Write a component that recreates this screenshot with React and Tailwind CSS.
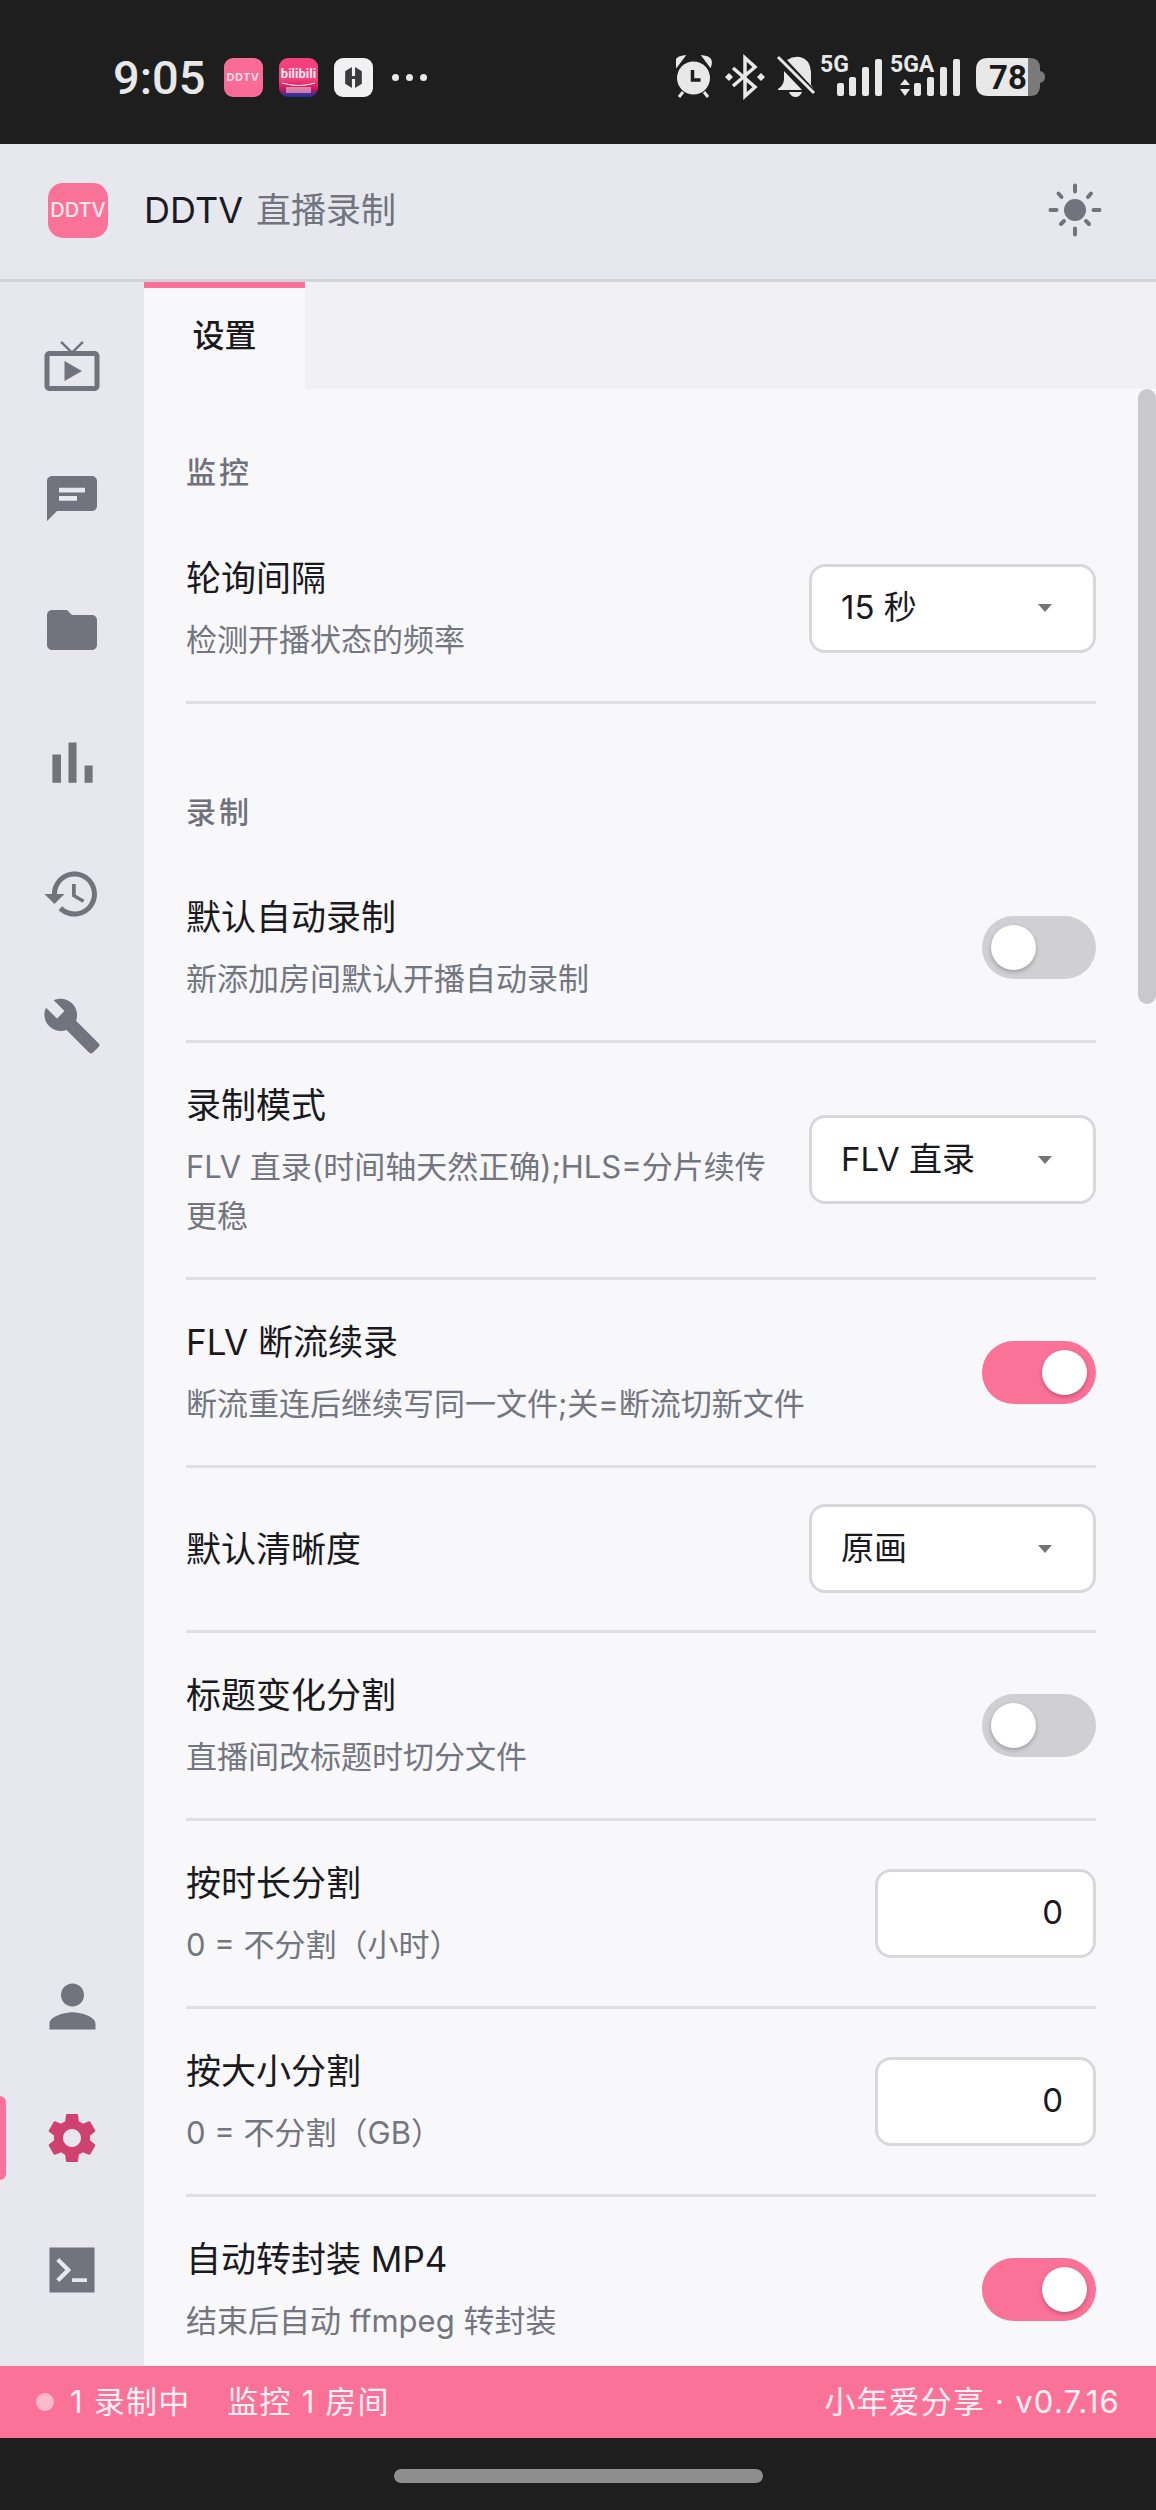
import React from 'react';

const navTop = [
  { name: 'tv', d: 'M21 6h-7.59l3.29-3.29L16 2l-4 4-4-4-.71.71L10.59 6H3c-1.1 0-2 .89-2 2v12c0 1.1.9 2 2 2h18c1.1 0 2-.9 2-2V8c0-1.11-.9-2-2-2zm0 14H3V8h18v12zM9 10v8l7-4z' },
  { name: 'chat', d: 'M20 3.200H4c-1.100 0-2 .9-2 2v16l4-4h14c1.100 0 2-.9 2-2V5.200c0-1.100-.9-2-2-2zM6.800 7.900h10.400v1.900H6.800zm0 3.300H14v1.900H6.800z' },
  { name: 'folder', d: 'M10 4H4c-1.1 0-1.99.9-1.99 2L2 18c0 1.1.9 2 2 2h16c1.1 0 2-.9 2-2V8c0-1.1-.9-2-2-2h-8l-2-2z' },
  { name: 'bars', big: true, d: 'M5 9.2h3V19H5zM10.6 5h2.8v14h-2.8zm5.6 8H19v6h-2.8z' },
  { name: 'history', d: 'M13 3c-4.97 0-9 4.03-9 9H1l3.89 3.89.07.14L9 12H6c0-3.87 3.13-7 7-7s7 3.13 7 7-3.13 7-7 7c-1.93 0-3.68-.79-4.94-2.06l-1.42 1.42C8.27 19.99 10.51 21 13 21c4.97 0 9-4.03 9-9s-4.03-9-9-9zm-1 5v5l4.28 2.54.72-1.21-3.5-2.08V8H12z' },
  { name: 'build', d: 'M22.7 19l-9.1-9.1c.9-2.3.4-5-1.5-6.9-2-2-5-2.4-7.4-1.3L9 6 6 9 1.6 4.7C.4 7.1.9 10.1 2.9 12.1c1.9 1.9 4.6 2.4 6.9 1.5l9.1 9.1c.4.4 1 .4 1.4 0l2.3-2.3c.5-.4.5-1.1.1-1.4z' },
];

const personPath = 'M12 12c2.21 0 4-1.79 4-4s-1.79-4-4-4-4 1.79-4 4 1.79 4 4 4zm0 2c-2.67 0-8 1.34-8 4v2h16v-2c0-2.66-5.33-4-8-4z';
const gearPath = 'M19.14 12.94c.04-.3.06-.61.06-.94 0-.32-.02-.64-.07-.94l2.03-1.58c.18-.14.23-.41.12-.61l-1.92-3.32c-.12-.22-.37-.29-.59-.22l-2.39.96c-.5-.38-1.03-.7-1.62-.94l-.36-2.54c-.04-.24-.24-.41-.48-.41h-3.84c-.24 0-.43.17-.47.41l-.36 2.54c-.59.24-1.13.57-1.62.94l-2.39-.96c-.22-.08-.47 0-.59.22L2.74 8.87c-.12.21-.08.47.12.61l2.03 1.58c-.05.3-.09.63-.09.94s.02.64.07.94l-2.03 1.58c-.18.14-.23.41-.12.61l1.92 3.32c.12.22.37.29.59.22l2.39-.96c.5.38 1.03.7 1.62.94l.36 2.54c.05.24.24.41.48.41h3.84c.24 0 .44-.17.47-.41l.36-2.54c.59-.24 1.13-.56 1.62-.94l2.39.96c.22.08.47 0 .59-.22l1.92-3.32c.12-.22.07-.47-.12-.61l-2.01-1.58zM12 15.6c-1.98 0-3.6-1.62-3.6-3.6s1.62-3.6 3.6-3.6 3.6 1.62 3.6 3.6-1.62 3.6-3.6 3.6z';
const terminalPath = 'M3 3h18v18H3z M5.7 8.400l3.6 3.600-3.600 3.600 1.200 1.200 4.800-4.800-4.800-4.800z M12 15.300v1.500h6v-1.500z';

const NavIcon = ({ d, active, big }) => (
  <div className="relative flex h-[132px] items-center justify-center">
    {active && <span className="absolute left-0 top-[24px] h-[84px] w-[6px] rounded-r-md bg-[#fb7299]" />}
    <svg viewBox="0 0 24 24" className={`${big ? 'h-[69px] w-[69px]' : 'h-[60px] w-[60px]'} ${active ? 'text-[#cf4270]' : 'text-[#71737d]'}`} fill="currentColor">
      <path d={d} fillRule="evenodd" />
    </svg>
  </div>
);

const Toggle = ({ on }) => (
  <div className={`flex h-[63px] w-[114px] shrink-0 items-center rounded-full p-[9px] ${on ? 'justify-end bg-[#fb7299]' : 'justify-start bg-[#d0d0d4]'}`}>
    <span className="h-[45px] w-[45px] rounded-full bg-white shadow-[0_2px_4px_rgba(0,0,0,0.25)]" />
  </div>
);

const Select = ({ value }) => (
  <div className="flex h-[89px] w-[287px] shrink-0 items-center justify-between rounded-[16px] border-[3px] border-[#d8d8dc] bg-white pl-[29px] pr-[41px] text-[33px] text-[#1a1a1e]">
    <span>{value}</span>
    <span className="h-0 w-0 border-x-[7px] border-t-[8px] border-x-transparent border-t-[#757575]" />
  </div>
);

const NumberBox = ({ value }) => (
  <div className="flex h-[89px] w-[221px] shrink-0 items-center justify-end rounded-[16px] border-[3px] border-[#d8d8dc] bg-white pr-[30px] text-[33px] text-[#1a1a1e]">
    {value}
  </div>
);

const Row = ({ title, sub, children }) => (
  <div className="flex items-center gap-8 border-b-[3px] border-[#e0e0e4] pb-[37px] pt-[36px]">
    <div className="min-w-0 flex-1">
      <div className="text-[35px] leading-[52px] text-[#1a1a1e]">{title}</div>
      {sub && <div className="mt-[11px] text-[31px] leading-[49px] text-[#73757f]">{sub}</div>}
    </div>
    {children}
  </div>
);

const SectionLabel = ({ children, className }) => (
  <div className={`text-[30px] font-medium leading-[40px] tracking-[3px] text-[#6f717b] ${className}`}>{children}</div>
);

const AppIcons = () => (
  <div className="ml-[18px] flex items-center gap-[16px]">
    <div className="flex h-[39px] w-[39px] items-center justify-center rounded-[9px] bg-[#fb6b98] text-[11px] font-bold tracking-[0.5px] text-[#f6dbe5]">DDTV</div>
    <svg viewBox="0 0 39 39" className="h-[39px] w-[39px]">
      <defs>
        <linearGradient id="bili" x1="0" y1="0" x2="0" y2="1">
          <stop offset="0.55" stopColor="#f4417e" />
          <stop offset="0.78" stopColor="#d5135a" />
          <stop offset="1" stopColor="#1133a8" />
        </linearGradient>
      </defs>
      <rect width="39" height="39" rx="9" fill="url(#bili)" />
      <text x="19.5" y="20" textAnchor="middle" fontSize="13" fontWeight="700" fill="#fbe7ef" fontFamily="Roboto, sans-serif">bilibili</text>
      <path d="M3 25q16.500 5 33 0" stroke="#fff" strokeWidth="1" fill="none" />
      <rect x="7" y="29" width="25" height="6" fill="#fff" opacity="0.45" />
    </svg>
    <div className="flex h-[39px] w-[39px] items-center justify-center rounded-[9px] bg-[#f1f1f1]">
      <svg viewBox="0 0 24 24" className="h-[25px] w-[25px]" fill="#3a3a3e">
        <path d="M10.500 2v8.500h3V13h-3v9L4 18V6zM13.500 22v-8.500h-3V11h3V2L20 6v12z" />
      </svg>
    </div>
    <div className="ml-[3px] flex items-center gap-[7px]">
      <span className="h-[7px] w-[7px] rounded-full bg-[#e8e8e8]" />
      <span className="h-[7px] w-[7px] rounded-full bg-[#e8e8e8]" />
      <span className="h-[7px] w-[7px] rounded-full bg-[#e8e8e8]" />
    </div>
  </div>
);

const bars = (xs) => {
  const tops = [83, 77, 67, 59];
  return xs.map((x, i) => <rect key={x} x={x} y={tops[i]} width="7" height={96 - tops[i]} rx="2" fill="#e8e8e8" />);
};

const StatusIcons = () => (
  <svg viewBox="676 46 369 62" className="ml-auto mr-[111px] h-[62px] w-[369px]">
    {/* alarm */}
    <circle cx="693.500" cy="78" r="16.500" fill="#e8e8e8" />
    <path d="M677 65q-2-7 6-8zM710 65q2-7-6-8zM683 92l-4 5M704 92l4 5" fill="#e8e8e8" stroke="#e8e8e8" strokeWidth="3" />
    <path d="M692.500 70v10h8" fill="none" stroke="#1e1e1e" strokeWidth="3.500" />
    {/* bluetooth */}
    <path d="M733 68l22 19-10 9V58l10 9-22 19" fill="none" stroke="#e8e8e8" strokeWidth="3.500" />
    <path d="M729 73l4 4-4 4-4-4zM761 73l4 4-4 4-4-4z" fill="#e8e8e8" />
    {/* bell off */}
    <path d="M787 60q6-4 13-3 10 2 11 15v13l3 4zM778 89q5-3 6-9v-9l18 19H778z" fill="#e8e8e8" />
    <path d="M789 92h13q-2 5-6.500 5t-6.500-5z" fill="#e8e8e8" />
    <path d="M778 57l36 36" stroke="#e8e8e8" strokeWidth="3" />
    {/* 5G */}
    <text x="820" y="71.500" fontSize="23" fontWeight="700" fill="#e8e8e8" fontFamily="Roboto, sans-serif">5G</text>
    {bars([837, 849, 862, 875])}
    {/* 5GA */}
    <text x="890" y="71.500" fontSize="23" fontWeight="700" fill="#e8e8e8" fontFamily="Roboto, sans-serif">5GA</text>
    <path d="M905 79l5 6h-10zM905 96l5-7h-10z" fill="#e8e8e8" />
    {bars([914, 927, 940, 953])}
    {/* battery */}
    <path d="M1026 58h4q10 0 10 10v3q5 1 5 6t-5 6v3q0 10-10 10h-4z" fill="#7a7a7a" />
    <path d="M988 58h40v38h-40q-12 0-12-12V70q0-12 12-12z" fill="#e8e8e8" />
    <text x="1008" y="88.500" textAnchor="middle" fontSize="33" fontWeight="700" fill="#1a1a1a" fontFamily="Roboto, sans-serif">78</text>
  </svg>
);

const SunIcon = () => (
  <svg viewBox="0 0 54 54" className="h-[54px] w-[54px] text-[#71737d]" fill="none" stroke="currentColor" strokeWidth="4" strokeLinecap="round">
    <circle cx="27" cy="27" r="11" fill="currentColor" stroke="none" />
    <path d="M27 2.500v6M27 45.500v6M2.500 27h6M45.500 27h6M10.500 10.500l3 3.500M43 10.500l-3 3.500M13 41l3-3M41 41l-3-3" />
  </svg>
);

export default function App() {
  return (
    <div className="flex h-[2510px] w-[1156px] flex-col overflow-hidden bg-[#f8f8fb] font-['Inter','Noto_Sans_CJK_SC',sans-serif] text-[35px]">
      <div className="flex h-[144px] shrink-0 items-center bg-[#1e1e1e] pl-[113px] pt-[10px]">
        <span className="font-['Roboto',sans-serif] text-[47px] font-medium leading-none text-[#e8e8e8]">9:05</span>
        <AppIcons />
        <StatusIcons />
      </div>

      <header className="flex h-[138px] shrink-0 items-center border-b-[3px] border-[#d2d2d8] bg-[#e7e7ee] pb-[3px] pl-[48px] pr-[54px]">
        <div className="flex h-[55px] w-[60px] items-center justify-center rounded-[15px] bg-[#fb7299] text-[20px] font-medium text-[#fbe9ef]">DDTV</div>
        <div className="ml-[36px] text-[36px] text-[#1a1a24]">
          DDTV <span className="ml-[3px] text-[35px] text-[#71737d]">直播录制</span>
        </div>
        <div className="ml-auto">
          <SunIcon />
        </div>
      </header>

      <div className="flex min-h-0 flex-1">
        <aside className="flex w-[144px] shrink-0 flex-col justify-between bg-[#e7e7ee] pb-[30px] pt-[18px]">
          <div>
            {navTop.map((item) => (
              <NavIcon key={item.name} d={item.d} big={item.big} />
            ))}
          </div>
          <div>
            <NavIcon d={personPath} big />
            <NavIcon d={gearPath} active />
            <NavIcon d={terminalPath} />
          </div>
        </aside>

        <main className="flex min-w-0 flex-1 flex-col">
          <div className="flex h-[107px] shrink-0 bg-[#f1f1f4]">
            <div className="flex w-[161px] items-center justify-center border-t-[6px] border-[#fb7299] bg-[#f8f8fb] pb-[6px] text-[32px] font-medium text-[#1a1a1e]">设置</div>
          </div>
          <div className="flex min-h-0 flex-1">
            <div className="min-w-0 flex-1 overflow-hidden pl-[42px] pr-[42px] pt-[63px]">
              <SectionLabel className="mb-[24px]">监控</SectionLabel>
              <Row title="轮询间隔" sub="检测开播状态的频率">
                <Select value="15 秒" />
              </Row>

              <SectionLabel className="mb-[23px] mt-[88px]">录制</SectionLabel>
              <Row title="默认自动录制" sub="新添加房间默认开播自动录制">
                <Toggle />
              </Row>
              <Row title="录制模式" sub="FLV 直录(时间轴天然正确);HLS=分片续传更稳">
                <Select value="FLV 直录" />
              </Row>
              <Row title="FLV 断流续录" sub="断流重连后继续写同一文件;关=断流切新文件">
                <Toggle on />
              </Row>
              <Row title="默认清晰度">
                <Select value="原画" />
              </Row>
              <Row title="标题变化分割" sub="直播间改标题时切分文件">
                <Toggle />
              </Row>
              <Row title="按时长分割" sub="0 = 不分割（小时）">
                <NumberBox value="0" />
              </Row>
              <Row title="按大小分割" sub="0 = 不分割（GB）">
                <NumberBox value="0" />
              </Row>
              <Row title="自动转封装 MP4" sub="结束后自动 ffmpeg 转封装">
                <Toggle on />
              </Row>
            </div>
            <div className="w-[18px] shrink-0">
              <div className="h-[615px] rounded-full bg-[#c9c9cc]" />
            </div>
          </div>
        </main>
      </div>

      <footer className="flex h-[72px] shrink-0 items-center bg-[#fb7299] pl-[36px] pr-[36px] text-[31px] tracking-[1.2px] text-white/90">
        <span className="mr-[16px] h-[18px] w-[18px] rounded-full bg-white/50" />
        <span>1 录制中</span>
        <span className="ml-[37px]">监控 1 房间</span>
        <span className="ml-auto">小年爱分享 · v0.7.16</span>
      </footer>

      <div className="flex h-[72px] shrink-0 justify-center bg-[#1e1e1e] pt-[31px]">
        <div className="h-[14px] w-[369px] rounded-full bg-[#8e8e8e]" />
      </div>
    </div>
  );
}
